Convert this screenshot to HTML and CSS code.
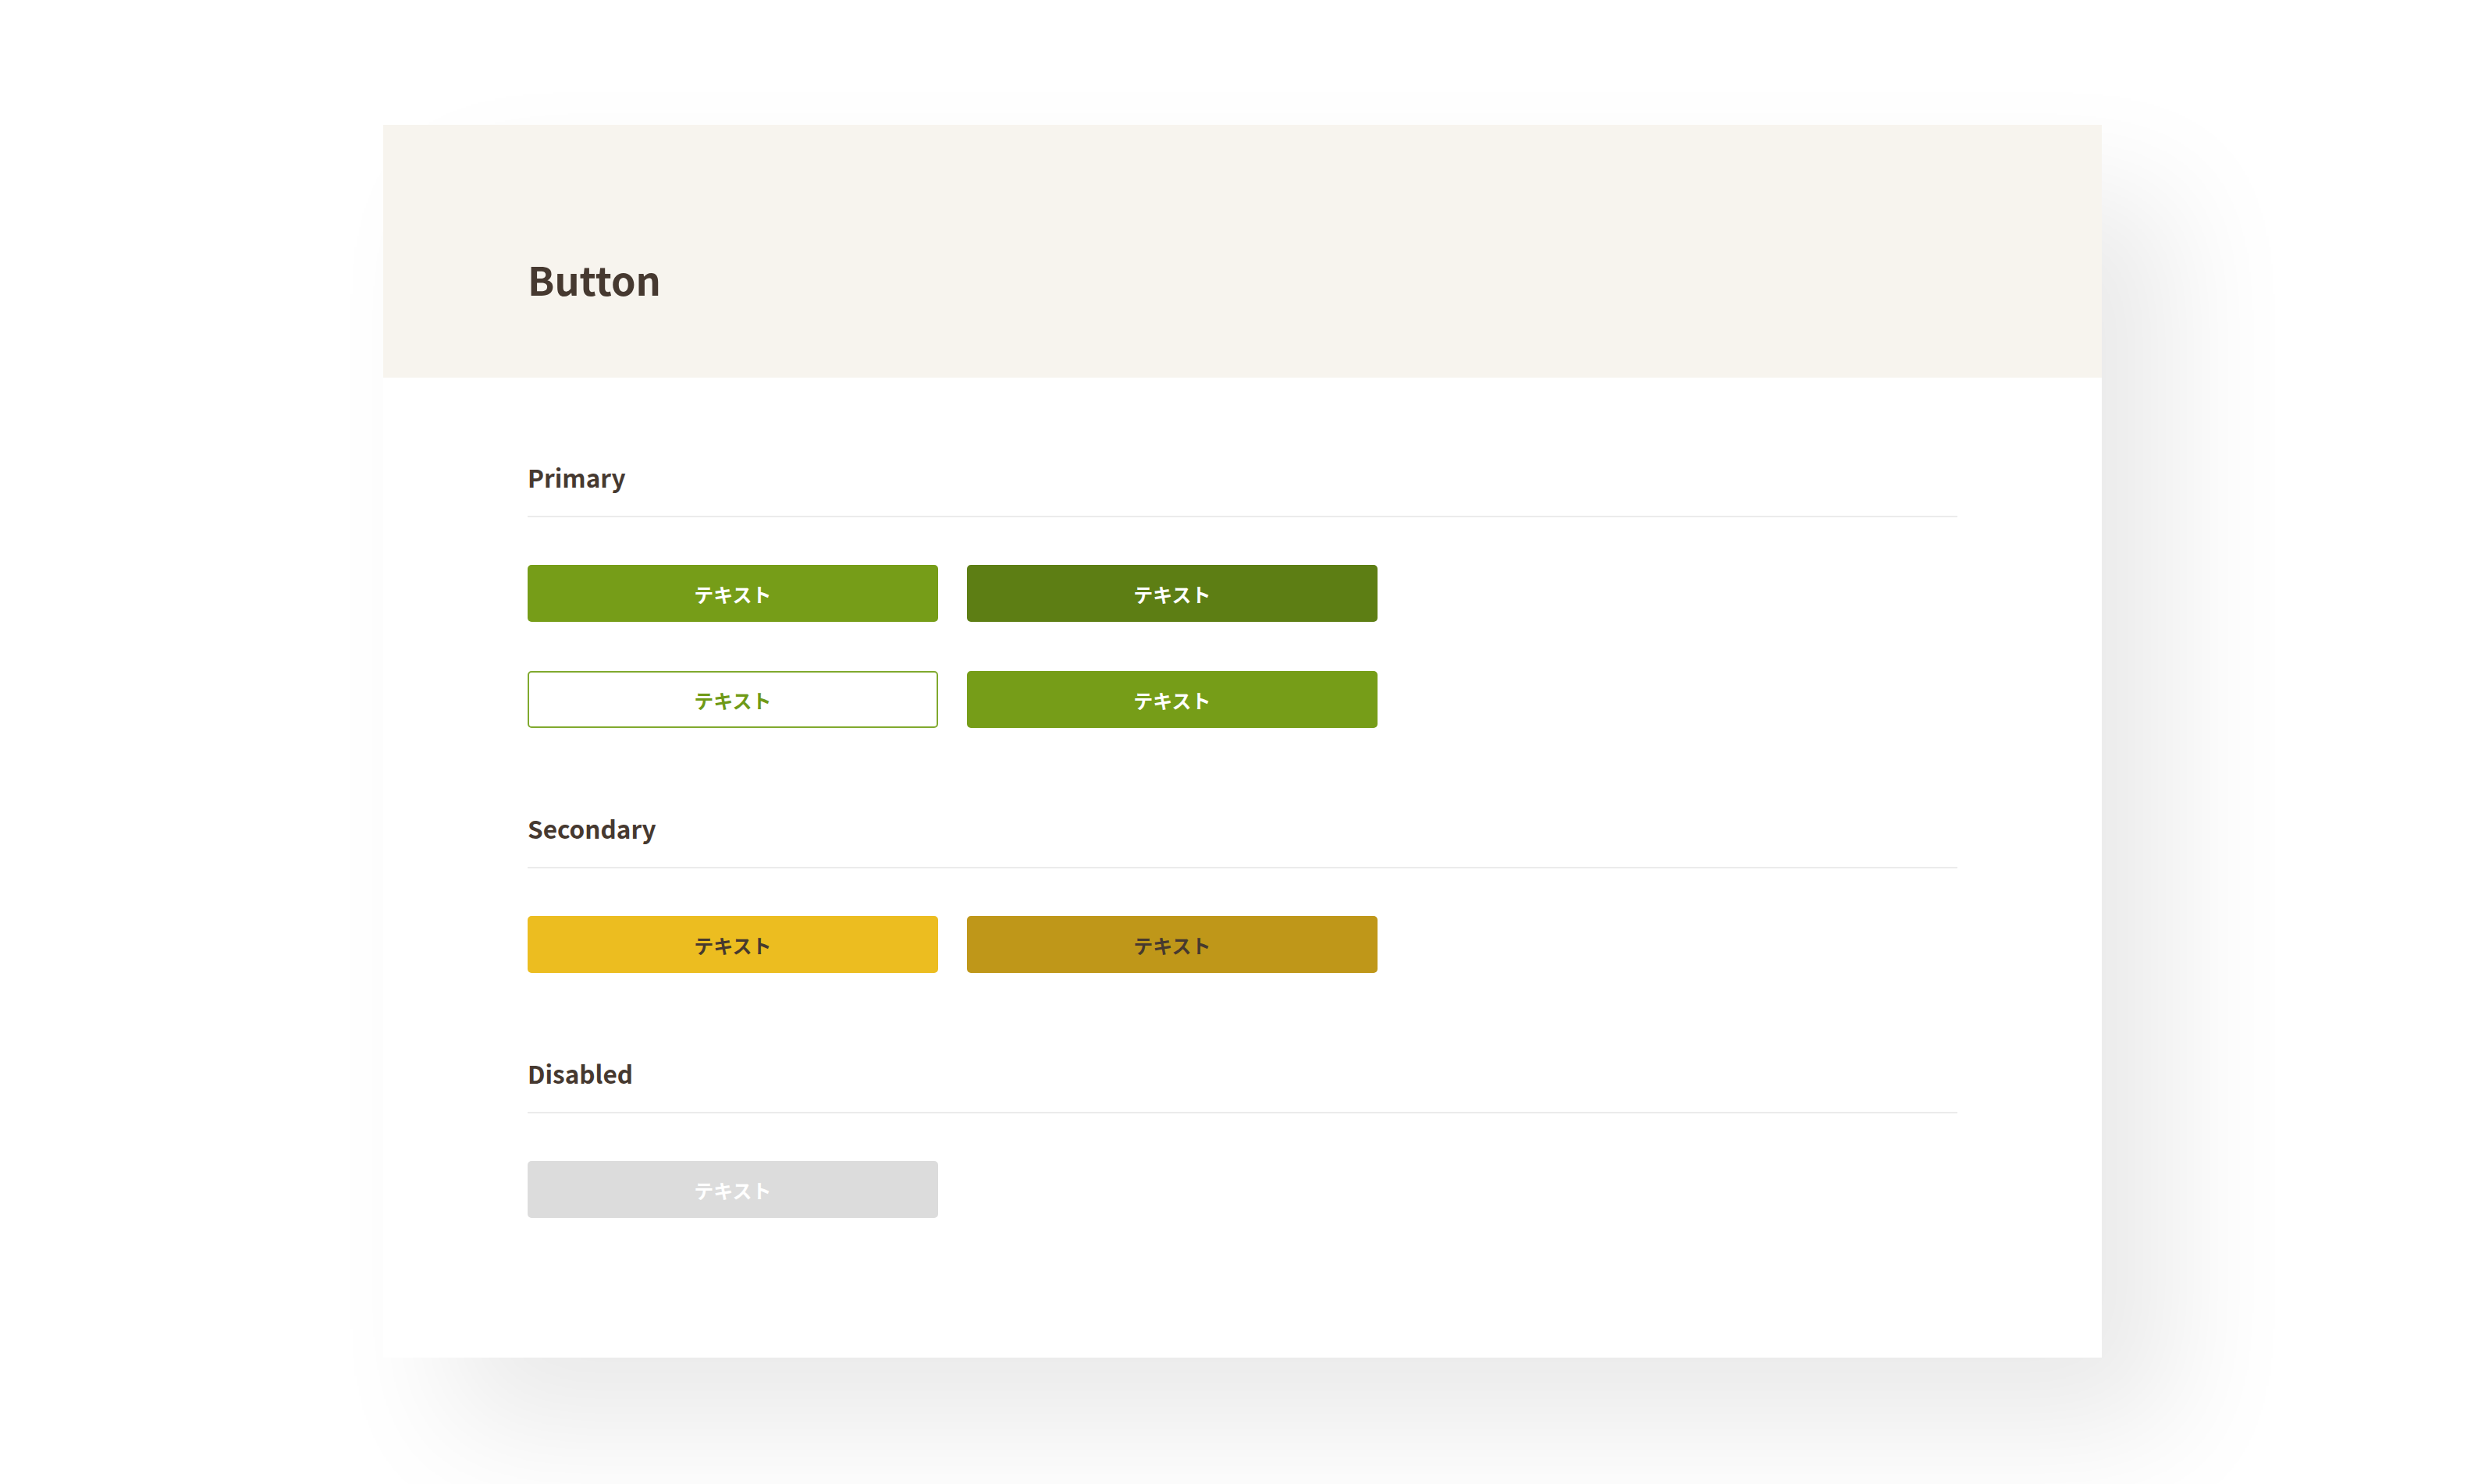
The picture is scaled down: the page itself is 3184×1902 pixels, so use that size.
FILE: index.html
```html
<!DOCTYPE html>
<html lang="ja">
<head>
<meta charset="utf-8">
<title>Button</title>
<link rel="stylesheet" href="styles.css">
</head>
<body>
<div class="stage">
  <div class="card">
    <header class="card-head">
      <h1 class="title">Button</h1>
    </header>
    <main class="card-body">
      <section class="group">
        <h2 class="group-title">Primary</h2>
        <div class="rows">
          <div class="row">
            <button class="btn btn-primary">テキスト</button>
            <button class="btn btn-primary-dark">テキスト</button>
          </div>
          <div class="row">
            <button class="btn btn-outline">テキスト</button>
            <button class="btn btn-primary">テキスト</button>
          </div>
        </div>
      </section>
      <section class="group">
        <h2 class="group-title">Secondary</h2>
        <div class="rows">
          <div class="row">
            <button class="btn btn-secondary">テキスト</button>
            <button class="btn btn-secondary-dark">テキスト</button>
          </div>
        </div>
      </section>
      <section class="group">
        <h2 class="group-title">Disabled</h2>
        <div class="rows">
          <div class="row">
            <button class="btn btn-disabled" disabled>テキスト</button>
          </div>
        </div>
      </section>
    </main>
  </div>
</div>
</body>
</html>
```

FILE: styles.css
```css
html, body {
  margin: 0;
  padding: 0;
  background: #ffffff;
}

body {
  font-family: "Noto Sans CJK JP", "Noto Sans", sans-serif;
  color: #463930;
}

.stage {
  padding: 160px 0 0 491px;
  height: 1742px;
}

.card {
  width: 2202px;
  height: 1580px;
  background: #ffffff;
  box-shadow: 90px 90px 150px rgba(0, 0, 0, 0.085);
  display: flex;
  flex-direction: column;
}

.card-head {
  height: 324px;
  box-sizing: border-box;
  background: #f7f4ee;
  padding: 172px 185px 0;
}

.title {
  margin: 0;
  font-size: 50.5px;
  font-weight: 700;
  line-height: 1;
  color: #463930;
}

.card-body {
  padding: 107px 185px 0;
  display: flex;
  flex-direction: column;
  gap: 108px;
}

.group-title {
  margin: 0;
  font-size: 31.5px;
  font-weight: 700;
  line-height: 40px;
  padding-bottom: 30px;
  border-bottom: 2px solid #ebebeb;
  color: #463930;
}

.rows {
  padding-top: 61px;
  display: flex;
  flex-direction: column;
  gap: 63px;
}

.row {
  display: flex;
  gap: 37px;
}

.btn {
  width: 526px;
  height: 73px;
  box-sizing: border-box;
  border: none;
  border-radius: 5px;
  font-family: "Noto Sans CJK JP", "Noto Sans", sans-serif;
  font-size: 25px;
  font-weight: 700;
  color: #ffffff;
  padding: 0;
  display: flex;
  align-items: center;
  justify-content: center;
}

.btn-primary {
  background: #769d18;
}

.btn-primary-dark {
  background: #5d7e14;
}

.btn-outline {
  background: #ffffff;
  border: 2px solid #80a92e;
  color: #6f9a17;
}

.btn-secondary {
  background: #ecbd20;
  color: #46392f;
}

.btn-secondary-dark {
  background: #bf9719;
  color: #46392f;
}

.btn-disabled {
  background: #dcdcdc;
  color: #ffffff;
}
```
